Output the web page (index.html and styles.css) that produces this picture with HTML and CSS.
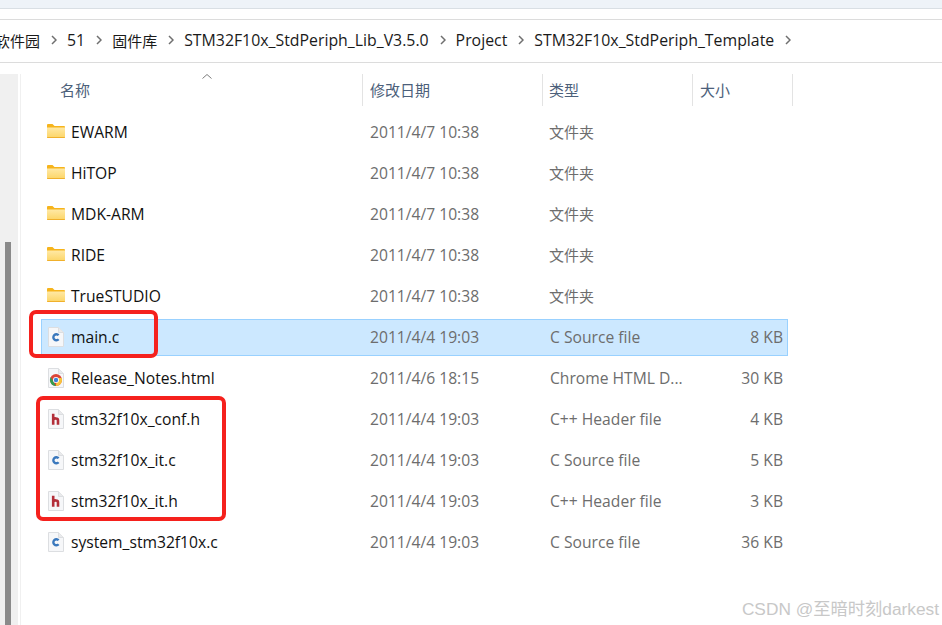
FILE: index.html
```html
<!DOCTYPE html>
<html lang="zh">
<head>
<meta charset="utf-8">
<title>STM32F10x_StdPeriph_Template</title>
<link rel="stylesheet" href="styles.css">
</head>
<body>
<svg class="defs" width="0" height="0" aria-hidden="true">
  <defs>
    <linearGradient id="fg" x1="0" y1="0" x2="0" y2="1"><stop offset="0" stop-color="#ffe9a6"/><stop offset="1" stop-color="#fcd566"/></linearGradient>
    <symbol id="folder" viewBox="0 0 18 14">
      <path d="M0 1a1 1 0 0 1 1-1h4.500l2 2H17a1 1 0 0 1 1 1v10a1 1 0 0 1-1 1H1a1 1 0 0 1-1-1z" fill="#f6b41c"/>
      <path d="M0 3.400h18V13a1 1 0 0 1-1 1H1a1 1 0 0 1-1-1z" fill="url(#fg)"/>
      <path d="M0 13h18a1 1 0 0 1-1 1H1a1 1 0 0 1-1-1z" fill="#f0b02c"/>
    </symbol>
    <symbol id="page" viewBox="0 0 16 20">
      <path d="M.5.5h10l5 5v14H.5z" fill="#f6f7f9" stroke="#dcdee1"/>
      <path d="M10.500.5v5h5" fill="#e9eaec" stroke="#dcdee1"/>
    </symbol>
    <symbol id="cfile" viewBox="0 0 16 20">
      <use href="#page"/>
      <path d="M10.600 8.200A3 3 0 1 0 10.600 12.200" fill="none" stroke="#3a78bd" stroke-width="2.400"/>
    </symbol>
    <symbol id="hfile" viewBox="0 0 16 20">
      <use href="#page"/>
      <path d="M5.200 4.800v11M5.200 10.600c.8-1.400 4.800-2 4.800 .8v4.400" fill="none" stroke="#b32f3a" stroke-width="2.600"/>
    </symbol>
    <symbol id="chrome" viewBox="0 0 16 20">
      <use href="#page"/>
      <circle cx="8" cy="12" r="6" fill="#dc4437"/>
      <path d="M2.700 9 8 18A6 6 0 0 1 2.700 9z" fill="#2f9e4f"/>
      <path d="M13.700 10H8.500L8 18A6 6 0 0 0 13.700 10z" fill="#f8c33b"/>
      <circle cx="8" cy="12" r="3" fill="#fff"/>
      <circle cx="8" cy="12" r="2.200" fill="#3e82d8"/>
    </symbol>
  </defs>
</svg>

<div class="topband"></div>
<nav class="crumbs">
  <span class="crumb cjk">软件园</span><svg class="chev" viewBox="0 0 6 10"><path d="M1 1l4 4-4 4"/></svg>
  <span class="crumb">51</span><svg class="chev" viewBox="0 0 6 10"><path d="M1 1l4 4-4 4"/></svg>
  <span class="crumb cjk">固件库</span><svg class="chev" viewBox="0 0 6 10"><path d="M1 1l4 4-4 4"/></svg>
  <span class="crumb">STM32F10x_StdPeriph_Lib_V3.5.0</span><svg class="chev" viewBox="0 0 6 10"><path d="M1 1l4 4-4 4"/></svg>
  <span class="crumb">Project</span><svg class="chev" viewBox="0 0 6 10"><path d="M1 1l4 4-4 4"/></svg>
  <span class="crumb">STM32F10x_StdPeriph_Template</span><svg class="chev" viewBox="0 0 6 10"><path d="M1 1l4 4-4 4"/></svg>
</nav>

<main class="main">
  <aside class="side"><div class="thumb"></div></aside>
  <section class="list">
    <header class="cols">
      <div class="col c-name">名称<svg class="sort" viewBox="0 0 10 5"><path d="M.5 4.500 5 .5l4.500 4"/></svg></div>
      <div class="col c-date">修改日期</div>
      <div class="col c-type">类型</div>
      <div class="col c-size">大小</div>
    </header>
    <div class="row"><svg class="ic ic-f"><use href="#folder"/></svg><span class="name">EWARM</span><span class="date">2011/4/7 10:38</span><span class="type cjk">文件夹</span><span class="size"></span></div>
    <div class="row"><svg class="ic ic-f"><use href="#folder"/></svg><span class="name">HiTOP</span><span class="date">2011/4/7 10:38</span><span class="type cjk">文件夹</span><span class="size"></span></div>
    <div class="row"><svg class="ic ic-f"><use href="#folder"/></svg><span class="name">MDK-ARM</span><span class="date">2011/4/7 10:38</span><span class="type cjk">文件夹</span><span class="size"></span></div>
    <div class="row"><svg class="ic ic-f"><use href="#folder"/></svg><span class="name">RIDE</span><span class="date">2011/4/7 10:38</span><span class="type cjk">文件夹</span><span class="size"></span></div>
    <div class="row"><svg class="ic ic-f"><use href="#folder"/></svg><span class="name">TrueSTUDIO</span><span class="date">2011/4/7 10:38</span><span class="type cjk">文件夹</span><span class="size"></span></div>
    <div class="row selected"><svg class="ic"><use href="#cfile"/></svg><span class="name">main.c</span><span class="date">2011/4/4 19:03</span><span class="type">C Source file</span><span class="size">8 KB</span></div>
    <div class="row"><svg class="ic"><use href="#chrome"/></svg><span class="name">Release_Notes.html</span><span class="date">2011/4/6 18:15</span><span class="type">Chrome HTML D...</span><span class="size">30 KB</span></div>
    <div class="row"><svg class="ic"><use href="#hfile"/></svg><span class="name">stm32f10x_conf.h</span><span class="date">2011/4/4 19:03</span><span class="type">C++ Header file</span><span class="size">4 KB</span></div>
    <div class="row"><svg class="ic"><use href="#cfile"/></svg><span class="name">stm32f10x_it.c</span><span class="date">2011/4/4 19:03</span><span class="type">C Source file</span><span class="size">5 KB</span></div>
    <div class="row"><svg class="ic"><use href="#hfile"/></svg><span class="name">stm32f10x_it.h</span><span class="date">2011/4/4 19:03</span><span class="type">C++ Header file</span><span class="size">3 KB</span></div>
    <div class="row"><svg class="ic"><use href="#cfile"/></svg><span class="name">system_stm32f10x.c</span><span class="date">2011/4/4 19:03</span><span class="type">C Source file</span><span class="size">36 KB</span></div>
  </section>
</main>

<div class="mark mark-main"></div>
<div class="mark mark-group"></div>
<div class="watermark">CSDN @至暗时刻darkest</div>
</body>
</html>
```
FILE: styles.css
```css
* { box-sizing: border-box; }
html, body { margin: 0; height: 100%; }
body {
  width: 942px;
  height: 625px;
  overflow: hidden;
  position: relative;
  background: #fff;
  font-family: "Open Sans", "Noto Sans CJK SC", sans-serif;
  font-size: 15.65px;
  color: #1a1a1a;
}
.defs { position: absolute; }

.topband {
  height: 20px;
  background: linear-gradient(#eef3f8 0 8px, #d9dfe4 8px 9px, #fff 9px 19px, #dcdcdc 19px);
}
.crumbs {
  height: 43px;
  display: flex;
  align-items: center;
  border-bottom: 1px solid #dcdcdc;
  margin-left: -5px;
  padding-bottom: 2px;
  white-space: nowrap;
  overflow: hidden;
  font-size: 15.85px;
}
.crumb { flex: none; }
.crumb.cjk { font-size: 15px; }
.chev {
  flex: none;
  width: 6px;
  height: 10px;
  margin: 0 10px 0 11px;
  fill: none;
  stroke: #6f6f6f;
  stroke-width: 1.5;
}

.main { display: flex; height: 562px; padding-top: 11px; }
.side {
  width: 18px;
  flex: none;
  background: #f0f0f0;
  padding: 168px 0 0 5px;
  margin-right: 2px;
}
.thumb { width: 6px; height: 100%; background: #8a8a8a; }
.list {
  flex: 1;
  border-left: 1px solid #f0f0f0;
  padding-left: 20px;
}

.cols { display: flex; height: 32px; }
.col {
  color: #4c607a;
  font-size: 15px;
  line-height: 32px;
  border-right: 1px solid #e3e3e3;
  padding-left: 7px;
  flex: none;
  position: relative;
}
.c-name { width: 322px; padding-left: 19px; }
.c-date { width: 180px; }
.c-type { width: 150px; padding-left: 6px; }
.c-size { width: 100px; }
.sort {
  position: absolute;
  left: 161px;
  top: 0;
  width: 10px;
  height: 5px;
  fill: none;
  stroke: #7c7c7c;
}

.row {
  display: flex;
  align-items: center;
  height: 41px;
  position: relative;
  white-space: nowrap;
}
.cols + .row { margin-top: 5px; }
.row.selected::before {
  content: "";
  position: absolute;
  left: 0;
  right: 154px;
  top: 3px;
  height: 35px;
  background: #cce8ff;
  border: 1px solid #99d1ff;
}
.row > * { position: relative; }
.ic { width: 16px; height: 20px; flex: none; margin: 0 7px; }
.ic-f { width: 18px; height: 14px; margin: 0 6px 2px 6px; }
.name { width: 299px; flex: none; color: #111; }
.date { width: 180px; flex: none; color: #6d6d6d; }
.type { width: 150px; flex: none; color: #6d6d6d; }
.type.cjk { font-size: 15px; text-indent: -1px; }
.size { width: 83px; flex: none; color: #6d6d6d; text-align: right; }

.mark {
  position: absolute;
  border: 4px solid #f5211d;
  border-radius: 7px;
}
.mark-main { left: 29px; top: 310px; width: 129px; height: 48px; }
.mark-group { left: 36px; top: 396px; width: 190px; height: 125px; }

.watermark {
  position: absolute;
  right: 3px;
  bottom: 5px;
  font-family: "Liberation Sans", "Noto Sans CJK SC", sans-serif;
  font-size: 17.3px;
  color: #c8c8c8;
}
```
